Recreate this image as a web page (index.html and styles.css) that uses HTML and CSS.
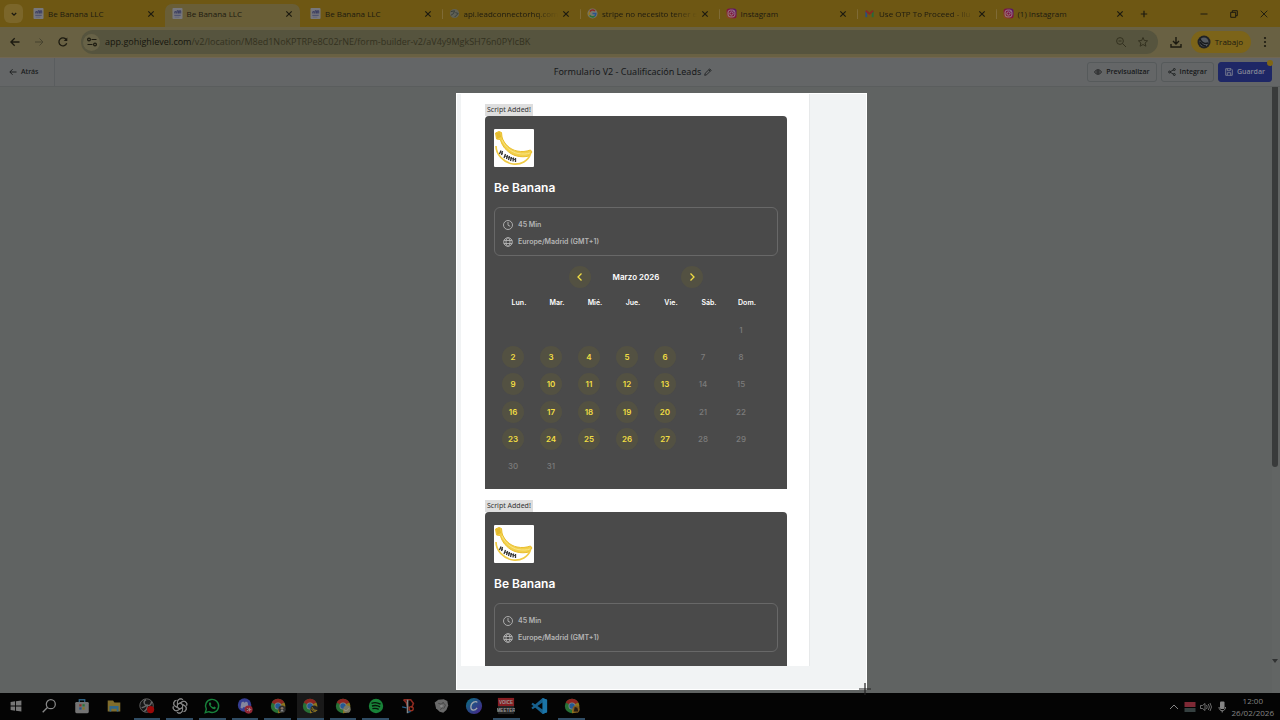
FILE: index.html
```html
<!DOCTYPE html>
<html lang="es">
<head>
<meta charset="utf-8">
<meta name="viewport" content="width=device-width, initial-scale=1">
<title>Be Banana LLC</title>
<link rel="stylesheet" href="styles.css">
</head>
<body>
<svg class="defs" aria-hidden="true">
  <defs>
    <symbol id="close" viewBox="0 0 8 8"><path d="M1.3 1.3l5.4 5.4M6.7 1.3L1.3 6.7" stroke="currentColor" stroke-width="1.2"/></symbol>
    <symbol id="doc" viewBox="0 0 12 12"><rect x=".5" width="11" height="12" rx="1" fill="#77777c"/><path d="M3 6V4h1.500v2M5.500 6V3H7v3M8 6V3h1.500v3" stroke="#34385f" fill="none"/><path d="M2.500 8h7" stroke="#44486c"/><path d="M3 10h5" stroke="#606478"/></symbol>
    <symbol id="insta" viewBox="0 0 12 12"><rect x=".5" y=".5" width="11" height="11" rx="3" fill="url(#ig)"/><rect x="2.300" y="2.300" width="7.400" height="7.400" rx="2.200" fill="none" stroke="#9a8590"/><circle cx="6" cy="6" r="1.800" fill="none" stroke="#9a8590"/><circle cx="8.300" cy="3.800" r=".5" fill="#9a8590"/></symbol>
    <linearGradient id="ig" x1="0" y1="1" x2="1" y2="0"><stop offset="0" stop-color="#8a5418"/><stop offset=".5" stop-color="#80123f"/><stop offset="1" stop-color="#4e1777"/></linearGradient>
    <linearGradient id="canva" x1="0" y1="0" x2="1" y2="1"><stop offset="0" stop-color="#087080"/><stop offset="1" stop-color="#49208a"/></linearGradient>
    <symbol id="chrome" viewBox="0 0 20 20"><circle cx="10" cy="10" r="8" fill="#287035"/><path d="M10 10L3.100 6A8 8 0 0 1 17 6z" fill="#8c2520"/><path d="M10 10L17 6A8 8 0 0 1 10 18z" fill="#8f741c"/><circle cx="10" cy="10" r="3.900" fill="#858585"/><circle cx="10" cy="10" r="3" fill="#245995"/></symbol>
    <symbol id="clock" viewBox="0 0 12 12"><circle cx="6" cy="6" r="4.500" fill="none" stroke="currentColor" stroke-width=".9"/><path d="M6 3v3.200l2.200 1.100" fill="none" stroke="currentColor" stroke-width=".9"/></symbol>
    <symbol id="globe" viewBox="0 0 12 12"><g fill="none" stroke="currentColor" stroke-width=".9"><circle cx="6" cy="6" r="4.300"/><ellipse cx="6" cy="6" rx="2" ry="4.300"/><path d="M1.800 4.500h8.400M1.800 7.500h8.400"/></g></symbol>
    <symbol id="banana" viewBox="0 0 40 38">
      <path d="M1.500 4L5 2.500l2.500 1L8 8c2 7 8 12.500 15 14 5 1 9 .5 13.500-1l1.500 2-3 4c-8 2-17 0-22.500-6C8 17 7.500 13 6 10.500L2.500 10z" fill="#f2d04a" stroke="#e9bd2c"/>
      <path d="M8 11c3 7 9 12 16 13.500 5 1 9 .5 12-.5" fill="none" stroke="#f9e384" stroke-width="1"/>
      <path d="M2 17c0 8 7 16.500 17 18 8 1 15-3 17.500-10" fill="none" stroke="#f0cb45" stroke-width="1.700"/>
      <path d="M2 4l4-1 1 5-4 2z" fill="#e2b92d"/>
      <path d="M7 21.500l-1.500 3.500M8.500 22l-1 4M11.500 25l-1.500 4M13.500 26l-1 4M15.500 27l-1 4M17.500 28l-1 4M19.500 28.500l-.5 4M21.500 29v4" stroke="#343434" stroke-width="1.300"/>
      <path d="M6 23l3 2M11 27l11 4" stroke="#414141"/>
    </symbol>
  </defs>
</svg>

<header class="browser">
  <div class="tabbar">
    <button class="tab-menu" aria-label="Buscar pestañas"><svg class="i8" viewBox="0 0 8 8"><path d="M1.800 3L4 5.200 6.200 3" fill="none" stroke="currentColor" stroke-width="1.300"/></svg></button>
    <nav class="tabs">
      <div class="tab"><svg class="fav"><use href="#doc"/></svg><span class="tab-title">Be Banana LLC</span><button class="tab-close" aria-label="Cerrar"><svg class="i8"><use href="#close"/></svg></button></div>
      <div class="tab active"><svg class="fav"><use href="#doc"/></svg><span class="tab-title">Be Banana LLC</span><button class="tab-close" aria-label="Cerrar"><svg class="i8"><use href="#close"/></svg></button></div>
      <div class="tab"><svg class="fav"><use href="#doc"/></svg><span class="tab-title">Be Banana LLC</span><button class="tab-close" aria-label="Cerrar"><svg class="i8"><use href="#close"/></svg></button></div>
      <div class="tab split"><svg class="fav" viewBox="0 0 12 12"><circle cx="6" cy="6" r="5" fill="#606156"/><path d="M2 4l4-1-1 3-3 2M6 10l4-4-3-1" stroke="#353b38" fill="none"/></svg><span class="tab-title fade">api.leadconnectorhq.com</span><button class="tab-close" aria-label="Cerrar"><svg class="i8"><use href="#close"/></svg></button></div>
      <div class="tab split"><svg class="fav" viewBox="0 0 12 12"><circle cx="6" cy="6" r="5.500" fill="#77766c"/><g fill="none" stroke-width="1.700"><path d="M3 4a3.600 3.600 0 0 1 5.700-.7" stroke="#8f2924"/><path d="M3 4a3.600 3.600 0 0 0 0 4" stroke="#96761c"/><path d="M3 8a3.600 3.600 0 0 0 5.300.9" stroke="#287038"/><path d="M8.300 8.900A3.600 3.600 0 0 0 9.600 6H6" stroke="#28558e"/></g></svg><span class="tab-title fade">stripe no necesito tener e</span><button class="tab-close" aria-label="Cerrar"><svg class="i8"><use href="#close"/></svg></button></div>
      <div class="tab split"><svg class="fav"><use href="#insta"/></svg><span class="tab-title">Instagram</span><button class="tab-close" aria-label="Cerrar"><svg class="i8"><use href="#close"/></svg></button></div>
      <div class="tab split"><svg class="fav" viewBox="0 0 12 12"><g fill="none" stroke-width="2"><path d="M2.500 10V3" stroke="#284f80"/><path d="M9.500 10V3" stroke="#28683a"/><path d="M2 3l4 3.300L10 3" stroke="#8a2924"/></g></svg><span class="tab-title fade">Use OTP To Proceed - Ilu</span><button class="tab-close" aria-label="Cerrar"><svg class="i8"><use href="#close"/></svg></button></div>
      <div class="tab split"><svg class="fav"><use href="#insta"/></svg><span class="tab-title">(1) Instagram</span><button class="tab-close" aria-label="Cerrar"><svg class="i8"><use href="#close"/></svg></button></div>
    </nav>
    <button class="new-tab" aria-label="Nueva pestaña"><svg class="i8" viewBox="0 0 8 8"><path d="M4 .8v6.400M.8 4h6.400" stroke="currentColor" stroke-width="1.200"/></svg></button>
    <div class="window-controls">
      <button aria-label="Minimizar"><svg class="i8" viewBox="0 0 8 8"><path d="M.5 4h7" stroke="currentColor"/></svg></button>
      <button aria-label="Restaurar"><svg class="i8" viewBox="0 0 8 8"><path d="M.7 2.300h5v5h-5zM2.300 2.300V.7h5v5H5.700" fill="none" stroke="currentColor"/></svg></button>
      <button aria-label="Cerrar ventana"><svg class="i8" viewBox="0 0 8 8"><path d="M.7.7l6.600 6.600M7.300.7L.7 7.300" stroke="currentColor" stroke-width=".9"/></svg></button>
    </div>
  </div>
  <div class="toolbar">
    <button class="nav-btn" aria-label="Atrás"><svg class="i12" viewBox="0 0 12 12"><path d="M10.500 6H2M5.700 2.200L1.900 6l3.800 3.800" fill="none" stroke="currentColor" stroke-width="1.300"/></svg></button>
    <button class="nav-btn faded" aria-label="Adelante"><svg class="i12" viewBox="0 0 12 12"><path d="M2 6h8M6.500 2.500L10 6 6.500 9.500" fill="none" stroke="currentColor"/></svg></button>
    <button class="nav-btn" aria-label="Recargar"><svg class="i12" viewBox="0 0 12 12"><path d="M9.700 7.200a4 4 0 1 1-.5-3.700" fill="none" stroke="currentColor" stroke-width="1.300"/><path d="M10.300 1.500v3.600H6.700z" fill="currentColor"/></svg></button>
    <div class="address">
      <button class="site-info" aria-label="Información del sitio"><svg class="i12" viewBox="0 0 12 12"><g fill="none" stroke="currentColor" stroke-width="1.200"><path d="M5.500 3.500h5M1.500 8.500h5"/><circle cx="3" cy="3.500" r="1.400"/><circle cx="9" cy="8.500" r="1.400"/></g></svg></button>
      <a class="url" href="#"><span class="host">app.gohighlevel.com</span>/v2/location/M8ed1NoKPTRPe8C02rNE/form-builder-v2/aV4y9MgkSH76n0PYIcBK</a>
      <button class="address-btn" aria-label="Zoom"><svg class="i12" viewBox="0 0 12 12"><g fill="none" stroke="currentColor"><circle cx="5" cy="5" r="3.400"/><path d="M7.500 7.500l3.500 3.500M3.500 5h3"/></g></svg></button>
      <button class="address-btn" aria-label="Marcador"><svg class="i12" viewBox="0 0 12 12"><path d="M6 1.500l1.300 3 3.300.3-2.500 2.200.8 3.200L6 8.500l-2.900 1.700.8-3.200L1.400 4.800l3.300-.3z" fill="none" stroke="currentColor"/></svg></button>
    </div>
    <button class="download" aria-label="Descargas"><svg class="i12" viewBox="0 0 12 12"><path d="M6 1v6.500M3 5l3 3 3-3M1 8v3h10V8" fill="none" stroke="currentColor" stroke-width="1.400"/></svg></button>
    <button class="profile"><svg class="avatar" viewBox="0 0 14 14"><circle cx="7" cy="7" r="6.500" fill="#202225"/><circle cx="7" cy="7" r="4.500" fill="#555a60"/><path d="M3 4c2 4 5 5 8 4M3 7c2 3 4 4 6 4" fill="none" stroke="#17191c" stroke-width="1.500"/></svg>Trabajo</button>
    <button class="more" aria-label="Más"><svg class="i12" viewBox="0 0 12 12" fill="currentColor"><circle cx="6" cy="2" r="1.100"/><circle cx="6" cy="6" r="1.100"/><circle cx="6" cy="10" r="1.100"/></svg></button>
  </div>
</header>

<div class="app-header">
  <a class="back" href="#"><svg class="i8" viewBox="0 0 8 8"><path d="M7.500 4H1M3.600 1.200L.8 4l2.800 2.800" fill="none" stroke="currentColor" stroke-width=".9"/></svg>Atrás</a>
  <h1 class="form-title">Formulario V2 - Cualificación Leads<svg class="i8" viewBox="0 0 8 8"><path d="M.7 7.300l.5-2L5.700.9l1.400 1.400-4.500 4.500zM4.800 1.800l1.400 1.400" fill="none" stroke="currentColor" stroke-width=".8"/></svg></h1>
  <div class="actions">
    <button class="action"><svg class="i8" viewBox="0 0 8 8"><path d="M.4 4Q4-.6 7.600 4 4 8.600.4 4z" fill="none" stroke="currentColor" stroke-width=".9"/><circle cx="4" cy="4" r="1.200" fill="none" stroke="currentColor" stroke-width=".9"/></svg>Previsualizar</button>
    <button class="action"><svg class="i8" viewBox="0 0 8 8"><path d="M6.200 1.500L1.700 4l4.500 2.500" fill="none" stroke="currentColor" stroke-width=".8"/><g fill="#626464" stroke="currentColor" stroke-width=".8"><circle cx="6.300" cy="1.500" r="1"/><circle cx="1.600" cy="4" r="1"/><circle cx="6.300" cy="6.500" r="1"/></g></svg>Integrar</button>
    <button class="action primary"><svg class="i8" viewBox="0 0 8 8"><path d="M.7.7h5.400l1.200 1.200v5.400H.7zM2.300.7v2h3v-2M2.300 7.300V4.700h3.400v2.600" fill="none" stroke="currentColor" stroke-width=".8"/></svg>Guardar<span class="dot"></span></button>
  </div>
</div>

<main class="canvas">
  <section class="selection">
    <div class="form-panel">
      <article class="widget">
        <span class="script-tag">Script Added!</span>
        <div class="card">
          <svg class="logo" role="img" aria-label="Be Banana"><use href="#banana"/></svg>
          <h2 class="brand">Be Banana</h2>
          <ul class="details"><li><svg class="i12"><use href="#clock"/></svg>45 Min</li><li><svg class="i12"><use href="#globe"/></svg>Europe/Madrid (GMT+1)</li></ul>
          <div class="month"><button class="round" aria-label="Mes anterior"><svg class="i12" viewBox="0 0 12 12"><path d="M7.500 2.500L4 6l3.500 3.500" fill="none" stroke="currentColor" stroke-width="1.300"/></svg></button><strong class="month-name">Marzo 2026</strong><button class="round" aria-label="Mes siguiente"><svg class="i12" viewBox="0 0 12 12"><path d="M4.500 2.500L8 6 4.500 9.500" fill="none" stroke="currentColor" stroke-width="1.300"/></svg></button></div>
          <table class="calendar">
            <thead><tr><th>Lun.</th><th>Mar.</th><th>Mié.</th><th>Jue.</th><th>Vie.</th><th>Sáb.</th><th>Dom.</th></tr></thead>
            <tbody>
              <tr><td></td><td></td><td></td><td></td><td></td><td></td><td><button class="day" disabled>1</button></td></tr>
              <tr><td><button class="day">2</button></td><td><button class="day">3</button></td><td><button class="day">4</button></td><td><button class="day">5</button></td><td><button class="day">6</button></td><td><button class="day" disabled>7</button></td><td><button class="day" disabled>8</button></td></tr>
              <tr><td><button class="day">9</button></td><td><button class="day">10</button></td><td><button class="day">11</button></td><td><button class="day">12</button></td><td><button class="day">13</button></td><td><button class="day" disabled>14</button></td><td><button class="day" disabled>15</button></td></tr>
              <tr><td><button class="day">16</button></td><td><button class="day">17</button></td><td><button class="day">18</button></td><td><button class="day">19</button></td><td><button class="day">20</button></td><td><button class="day" disabled>21</button></td><td><button class="day" disabled>22</button></td></tr>
              <tr><td><button class="day">23</button></td><td><button class="day">24</button></td><td><button class="day">25</button></td><td><button class="day">26</button></td><td><button class="day">27</button></td><td><button class="day" disabled>28</button></td><td><button class="day" disabled>29</button></td></tr>
              <tr><td><button class="day" disabled>30</button></td><td><button class="day" disabled>31</button></td><td></td><td></td><td></td><td></td><td></td></tr>
            </tbody>
          </table>
        </div>
      </article>
      <article class="widget">
        <span class="script-tag">Script Added!</span>
        <div class="card">
          <svg class="logo" role="img" aria-label="Be Banana"><use href="#banana"/></svg>
          <h2 class="brand">Be Banana</h2>
          <ul class="details"><li><svg class="i12"><use href="#clock"/></svg>45 Min</li><li><svg class="i12"><use href="#globe"/></svg>Europe/Madrid (GMT+1)</li></ul>
          <div class="card-end"></div>
        </div>
      </article>
    </div>
    <svg class="crosshair" viewBox="0 0 12 12"><path d="M6 0v12M0 6h12" stroke="#222" stroke-width="1.200"/></svg>
  </section>
  <div class="scrollbar"><div class="thumb"></div><svg class="scroll-arrow" viewBox="0 0 6 4"><path d="M0 0h6L3 4z" fill="#303232"/></svg></div>
</main>

<footer class="taskbar">
  <div class="apps">
    <button class="app" aria-label="Inicio"><svg viewBox="0 0 20 20"><path d="M4 5.500l5-.7v4.700H4zM10 4.600l6-.8v5.700h-6zM4 10.500h5v4.700l-5-.7zM10 10.500h6v5.700l-6-.8z" fill="#777"/></svg></button>
    <button class="app" aria-label="Buscar"><svg viewBox="0 0 20 20"><circle cx="12" cy="8" r="5" fill="none" stroke="#888" stroke-width="1.400"/><path d="M8.500 11.500L3 17" stroke="#888" stroke-width="1.500"/></svg></button>
    <button class="app" aria-label="Store"><svg viewBox="0 0 20 20"><path d="M7 6V3h6v3" fill="none" stroke="#2b5f80" stroke-width="1.500"/><rect x="2.500" y="5.500" width="15" height="12.500" rx="1.500" fill="#747474"/><path d="M7 8h2.500v2.500H7z" fill="#8b2d25"/><path d="M10.500 8H13v2.500h-2.500z" fill="#28753a"/><path d="M7 11.500h2.500V14H7z" fill="#21528b"/><path d="M10.500 11.500H13V14h-2.500z" fill="#8c7420"/></svg></button>
    <button class="app" aria-label="Explorador"><svg viewBox="0 0 20 20"><path d="M3 4h6l1.500 2H17v10H3z" fill="#816d2c"/><path d="M5 10h10v6h-2v-3H7v3H5z" fill="#31678a"/></svg></button>
    <button class="app open" aria-label="OBS"><svg viewBox="0 0 20 20"><circle cx="9.500" cy="9.500" r="7.500" fill="#171717" stroke="#696969"/><path d="M9 3c-4 2-2 6 1 6 3 1 5-1 5-4M4 12c4-1 5-2 6-3 1 3 0 5-3 7" fill="none" stroke="#696969" stroke-width="1.500"/><circle cx="14" cy="14" r="4" fill="#9a0808"/></svg></button>
    <button class="app open" aria-label="ChatGPT"><svg viewBox="0 0 20 20"><g fill="none" stroke="#858585" stroke-width="1.100"><path id="petal" d="M7.200 11.500V5.500a3.500 3.500 0 0 1 6.300-2M7.200 8.200l5.300-3a3.500 3.500 0 0 1 5 4.300"/><use href="#petal" transform="rotate(60 10 10)"/><use href="#petal" transform="rotate(120 10 10)"/><use href="#petal" transform="rotate(180 10 10)"/><use href="#petal" transform="rotate(240 10 10)"/><use href="#petal" transform="rotate(300 10 10)"/></g></svg></button>
    <button class="app open" aria-label="WhatsApp"><svg viewBox="0 0 20 20"><path d="M2.500 17.500l1.200-4A7.300 7.300 0 1 1 6.500 16.300z" fill="none" stroke="#18813b" stroke-width="1.600"/><path d="M7 6c-2 2 3 8 6 7.500 1-.3 1.500-1.500 1-2l-1.500-1-1 1C9.500 11 9 10 8.500 9l.8-1L8.500 6z" fill="#18813b"/></svg></button>
    <button class="app open" aria-label="Discord"><svg viewBox="0 0 20 20"><circle cx="9.500" cy="9" r="7.500" fill="#353d91"/><path d="M5 12l1-6 2-1 1 1h1l1-1 2 1 1 6-2 1-1-1.500H8L7 13z" fill="#85879e"/><circle cx="14" cy="14" r="4.500" fill="#922735"/><path d="M12 13h1.500v2H12M15 12v4M14 14h3" stroke="#a88"/></svg></button>
    <button class="app open" aria-label="Chrome personal"><svg viewBox="0 0 20 20"><use href="#chrome"/><circle cx="14.500" cy="13.500" r="4" fill="#303030"/><circle cx="14.500" cy="12.500" r="1.500" fill="#867064"/><path d="M12.500 16q2-4 4 0z" fill="#858585"/></svg></button>
    <button class="app open current" aria-label="Chrome Trabajo"><svg viewBox="0 0 20 20"><use href="#chrome"/><circle cx="14.500" cy="13.500" r="4" fill="#232323"/><path d="M12 11q2 5 6 4M11.500 13q2 4 5 3" fill="none" stroke="#a18621"/></svg></button>
    <button class="app open" aria-label="Chrome secundario"><svg viewBox="0 0 20 20"><use href="#chrome"/><circle cx="14.500" cy="13.500" r="4" fill="#777764"/><path d="M11 14q3 3 6-2" fill="none" stroke="#9c9781"/></svg></button>
    <button class="app open" aria-label="Spotify"><svg viewBox="0 0 20 20"><circle cx="10" cy="10" r="8" fill="#188238"/><path d="M5 7q5-2 10 1M5.500 10q5-1.500 9 1M6 13q4-1 7 .7" fill="none" stroke="#061509" stroke-width="1.500"/></svg></button>
    <button class="app" aria-label="Recortes"><svg viewBox="0 0 20 20"><path d="M5 3h8l3 4-2 5M5 3l3 3 2 6" fill="none" stroke="#8b2920" stroke-width="1.800"/><path d="M9.500 3v15" stroke="#858585" stroke-width="1.800"/><circle cx="13.500" cy="13" r="2.300" fill="none" stroke="#9a3020" stroke-width="1.500"/><path d="M3.500 11l5 1M10 17l3-1" stroke="#28618b" stroke-width="1.500"/></svg></button>
    <button class="app" aria-label="Asistente"><svg viewBox="0 0 20 20"><path d="M3 6l4-3 6-.5 4 2 1 5-2 5-3.500 3-4-1-4-4z" fill="#696969"/><path d="M7 7l3 1 3-2M12 6l3 3-2 4M9 14l3-2" fill="none" stroke="#424242"/><circle cx="10.500" cy="10" r="1.500" fill="#858585"/></svg></button>
    <button class="app" aria-label="Canva"><svg viewBox="0 0 20 20"><circle cx="10" cy="10" r="9" fill="url(#canva)"/><path d="M13.500 6c-1-2.500-7 0-7 5 0 4.500 4.500 4.500 7 1" fill="none" stroke="#a0a6ad" stroke-width="1.400"/></svg></button>
    <button class="app open" aria-label="Voicemeeter"><svg viewBox="0 0 20 20"><path d="M1 1h18v9H1z" fill="#871e22"/><path d="M1 10h18v9H1z" fill="#242424"/><text x="10" y="8" class="app-label">VOICE</text><text x="10" y="17" class="app-label">MEETER</text></svg></button>
    <button class="app" aria-label="Visual Studio Code"><svg viewBox="0 0 20 20"><path d="M14 1l5 2v14l-5 2L1.500 8 3 6.500 14 14V6L3 13.500 1.500 12z" fill="#17608d"/><path d="M14 1l5 2v14l-5 2z" fill="#1b75a8"/></svg></button>
    <button class="app open" aria-label="Chrome alternativo"><svg viewBox="0 0 20 20"><use href="#chrome"/><circle cx="14.500" cy="13.500" r="4" fill="#805b20"/><path d="M12 16l1-5 3 1 1 4z" fill="#241b14"/></svg></button>
  </div>
  <div class="tray">
    <svg class="i12" viewBox="0 0 12 12"><path d="M2 8l4-4 4 4" fill="none" stroke="currentColor"/></svg>
    <svg class="i12" viewBox="0 0 12 12"><path d="M.5 1h11v5H.5z" fill="#7e2935"/><path d="M.5 7h11v4H.5z" fill="#354040"/></svg>
    <svg class="i12" viewBox="0 0 12 12"><path d="M.5 4.500h2l2.500-2v7l-2.500-2h-2zM6.500 4q1.500 2 0 4M8.300 3q2.200 3 0 6M10 2q3 4 0 8" fill="none" stroke="currentColor" stroke-width=".8"/></svg>
    <svg class="i12" viewBox="0 0 12 12"><rect x="4" y=".5" width="4.500" height="7.500" rx="1" fill="currentColor"/><path d="M3 6c0 5 6.500 5 6.500 0M6.200 9.500v2" fill="none" stroke="currentColor"/></svg>
    <time class="clock" datetime="2026-02-26T12:00"><span>12:00</span><span>26/02/2026</span></time>
  </div>
</footer>
</body>
</html>
```
FILE: styles.css
```css
* { box-sizing: border-box; }
body {
  margin: 0;
  height: 100vh;
  display: flex;
  flex-direction: column;
  overflow: hidden;
  background: #606362;
  color: #17191a;
  font: 8px/12px "Noto Sans", "Open Sans", sans-serif;
}
button { border: 0; padding: 0; margin: 0; background: none; color: inherit; font: inherit; display: flex; align-items: center; justify-content: center; }
a { color: inherit; text-decoration: none; }
svg { display: block; flex: none; }
.defs { position: absolute; width: 0; height: 0; }
.i8 { width: 8px; height: 8px; }
.i12 { width: 12px; height: 12px; }

.browser { flex: none; color: #1c1a10; font-family: "Open Sans", sans-serif; }
.tabbar { height: 27px; display: flex; align-items: center; background: #6e5713; padding-left: 4px; }
.tab-menu { width: 19px; height: 19px; border-radius: 6px; background: #7b662a; }
.tabs { flex: 1; display: grid; grid-template-columns: repeat(8, 1fr); height: 27px; padding: 4px 0 0 3px; }
.tab { display: flex; align-items: center; gap: 4px; min-width: 0; margin-right: 3px; padding: 0 7px 4px; border-radius: 7px 7px 0 0; }
.tab.active { background: #695e37; }
.tab.split { background: linear-gradient(#7f6b36, #7f6b36) 0 5px / 1px 10px no-repeat; }
.fav { width: 11px; height: 11px; }
.tab-title { flex: 1; white-space: nowrap; }
.tab-title.fade { mask-image: linear-gradient(90deg, #000 75%, transparent); }
.new-tab { width: 20px; height: 20px; }
.window-controls { display: flex; gap: 22px; padding: 0 12px 0 46px; }

.toolbar { height: 31px; display: flex; align-items: center; background: #696143; border-bottom: 1px solid #716653; padding: 0 9px; }
.nav-btn { width: 24px; height: 24px; padding-right: 12px; }
.nav-btn.faded { color: #47432f; }
.address { flex: 1; display: flex; align-items: center; gap: 5px; min-width: 0; height: 24px; padding: 0 9px 0 2px; border-radius: 12px; background: #56543e; color: #33311f; }
.site-info { width: 17px; height: 17px; border-radius: 50%; background: #676247; color: #1c1a10; }
.url { flex: 1; overflow: hidden; white-space: nowrap; font-size: 9px; }
.host { color: #17160e; }
.address-btn { padding-left: 5px; }
.download { width: 33px; padding-left: 3px; }
.profile { height: 22px; padding: 0 8px 0 6px; gap: 4px; border-radius: 11px; background: #7c6419; }
.avatar { width: 14px; height: 14px; }
.more { width: 12px; margin-left: 8px; }

.app-header { flex: none; height: 29px; display: grid; grid-template-columns: 1fr auto 1fr; align-items: center; background: #646667; border-bottom: 1px solid #5a5d5d; }
.back { display: flex; align-items: center; gap: 4px; width: 55px; height: 28px; padding-left: 9px; border-right: 1px solid #5a5d5f; font-size: 7px; font-weight: 500; }
.form-title { margin: 0; padding-right: 14px; display: flex; align-items: center; gap: 3px; font-size: 9px; font-weight: 400; }
.actions { display: flex; justify-content: flex-end; gap: 4px; padding-right: 8px; }
.action { position: relative; height: 20px; padding: 0 6px; gap: 4px; border: 1px solid #565a5b; border-radius: 3px; font: 600 7px/12px "Open Sans", sans-serif; }
.action.primary { background: #1e2766; border-color: #1e2766; color: #858896; }
.dot { position: absolute; top: -3px; right: -2px; width: 6px; height: 6px; border-radius: 50%; background: #806614; }

.canvas { flex: 1; min-height: 0; display: grid; grid-template-columns: 456fr 411px 405fr 8px; background: #606362; }
.selection { grid-column: 2; position: relative; min-height: 0; margin: 6px 0 3px; padding: 0 56px 23px 4px; border: 1px solid #fff; background: #f1f3f4; display: flex; }
.form-panel { flex: 1; overflow: hidden; padding: 10px 22px 0 24px; background: #fff; border-right: 1px solid #e7e9ea; }
.widget { display: flex; flex-direction: column; align-items: flex-start; margin-bottom: 11px; }
.script-tag { height: 12px; padding: 0 2px; background: #dedede; color: #333; font-size: 7px; }
.card { align-self: stretch; padding: 13px 9px 9px; border-radius: 4px 4px 0 0; background: #4a4a4a; font-family: Inter, sans-serif; color: #fff; }
.card-end { height: 12px; }
.logo { width: 40px; height: 38px; background: #fff; border-radius: 1px; }
.brand { margin: 13px 0 11px; font-size: 12px; line-height: 16px; font-weight: 600; }
.details { list-style: none; margin: 0; padding: 8px 7px 5px; border: 1px solid #686868; border-radius: 6px; color: #b5b5b5; font-size: 7px; line-height: 17px; font-weight: 600; }
.details li { display: flex; align-items: center; gap: 4px; }
.month { display: flex; align-items: center; justify-content: center; gap: 22px; padding-top: 10px; }
.month-name { font-size: 8px; font-weight: 600; }
.round, .day { width: 22px; height: 22px; border-radius: 50%; background: #535142; color: #f1dd43; }
.calendar { width: 266px; height: 190px; margin-top: 2px; border-collapse: collapse; table-layout: fixed; }
.calendar th { height: 26px; padding: 0 0 0 12px; font-size: 7px; font-weight: 600; }
.calendar td { height: 27px; padding: 0; }
.day { margin: 0 auto; font-size: 8px; font-weight: 600; }
.day:disabled { background: none; color: #7c7c7c; font-weight: 500; }
.crosshair { position: absolute; right: -5px; bottom: -6px; width: 12px; height: 12px; }
.scrollbar { grid-column: 4; display: flex; flex-direction: column; justify-content: space-between; padding: 0 2px 30px 0; background: #626564; }
.thumb { height: 66%; background: #393b3b; border-radius: 0 0 3px 3px; }
.scroll-arrow { width: 6px; height: 4px; }

.taskbar { flex: none; height: 27px; display: flex; justify-content: space-between; background: #040404; color: #858585; }
.apps { display: grid; grid-template-columns: repeat(18, 1fr); flex: 0 1 588px; }
.app { height: 27px; border-bottom: 2px solid transparent; margin: 0 3px; }
.app svg { width: 18px; height: 18px; }
.app.open { border-color: #304d65; }
.app.current { background: #191919; }
.app-label { font: 700 5px "Liberation Sans", sans-serif; text-anchor: middle; fill: #999; }
.tray { display: flex; align-items: center; gap: 4px; padding-right: 6px; font-family: "Open Sans", sans-serif; }
.clock { display: flex; flex-direction: column; align-items: center; }
```
